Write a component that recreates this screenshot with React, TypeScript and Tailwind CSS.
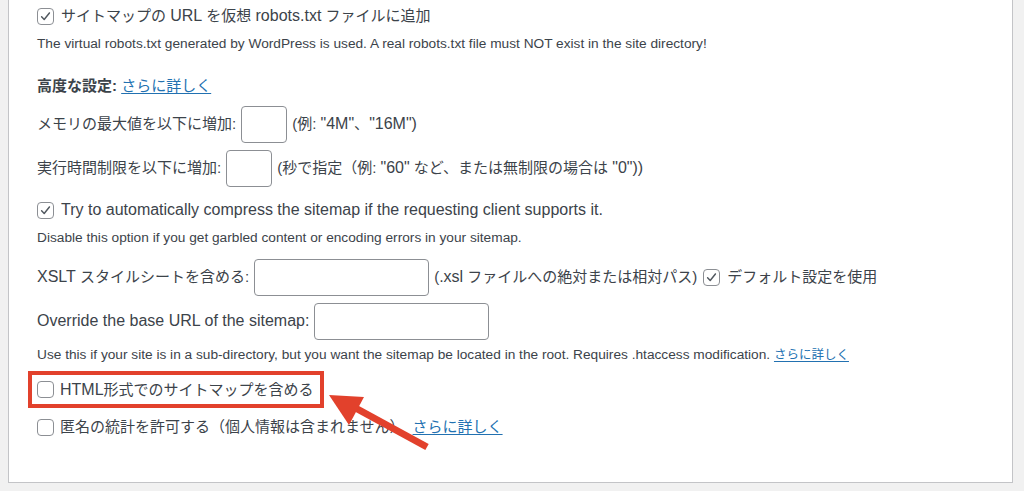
import type { ReactNode } from "react";

const Check = ({ checked }: { checked?: boolean }) => (
  <span className="flex h-[17px] w-[17px] shrink-0 items-center justify-center rounded-[4px] border border-[#8c8f94] bg-white">
    {checked && (
      <svg viewBox="0 0 16 16" className="h-[13px] w-[13px]">
        <path d="M3.2 8.4 L6.4 11.6 L12.8 3.6" fill="none" stroke="#50575e" strokeWidth="1.8" strokeLinecap="round" strokeLinejoin="round" />
      </svg>
    )}
  </span>
);

const Field = ({ className }: { className: string }) => (
  <span className={`mx-[5px] inline-block h-[37px] rounded-[4px] border border-[#8c8f94] bg-white ${className}`} />
);

const Link = ({ children }: { children: string }) => (
  <a className="text-[#2271b1] underline underline-offset-2">{children}</a>
);

// latin runs render a bit larger than the CJK glyphs in the screenshot
const L = ({ children }: { children: ReactNode }) => <span className="text-[16px]">{children}</span>;

export default function App() {
  return (
    <div
      className="relative h-[491px] w-[1024px] overflow-hidden bg-[#f1f1f1] pl-[8px] pr-[11px] text-[#3c434a]"
      style={{ fontFamily: '"Liberation Sans", "Noto Sans CJK JP", sans-serif' }}
    >
      <div className="flex flex-col border-x border-b border-[#c3c4c7] bg-white pb-[44px] pl-[28px] text-[15px]">
        {/* sitemap url in robots */}
        <div className="flex h-[32px] items-center gap-[7px]">
          <Check checked />
          <span>
            サイトマップの <L>URL</L> を仮想 <L>robots.txt</L> ファイルに追加
          </span>
        </div>
        <div className="flex h-[24px] items-center text-[13.7px]">
          The virtual robots.txt generated by WordPress is used. A real robots.txt file must NOT exist in the site directory!
        </div>

        {/* advanced */}
        <div className="mt-[14px] flex h-[32px] items-center">
          <span className="font-bold">高度な設定:</span>&nbsp;<Link>さらに詳しく</Link>
        </div>
        <div className="mt-[3px] flex h-[38px] items-center">
          <span>メモリの最大値を以下に増加:</span>
          <Field className="w-[46px]" />
          <span>
            (例: <L>"4M"</L>、<L>"16M")</L>
          </span>
        </div>
        <div className="mt-[6px] flex h-[38px] items-center">
          <span>実行時間制限を以下に増加:</span>
          <Field className="w-[46px]" />
          <span>
            (秒で指定（例: <L>"60"</L> など、または無制限の場合は <L>"0"))</L>
          </span>
        </div>

        <div className="mt-[9px] flex h-[28px] items-center gap-[7px]">
          <Check checked />
          <L>Try to automatically compress the sitemap if the requesting client supports it.</L>
        </div>
        <div className="mt-[4px] flex h-[20px] items-center text-[13.7px]">
          Disable this option if you get garbled content or encoding errors in your sitemap.
        </div>

        <div className="mt-[10px] flex h-[38px] items-center">
          <span>
            <L>XSLT</L> スタイルシートを含める:
          </span>
          <Field className="w-[175px]" />
          <span>
            (<L>.xsl</L> ファイルへの絶対または相対パス)
          </span>
          <span className="ml-[6px] mr-[7px]">
            <Check checked />
          </span>
          <span>デフォルト設定を使用</span>
        </div>
        <div className="mt-[6px] flex h-[38px] items-center">
          <L>Override the base URL of the sitemap:</L>
          <Field className="w-[175px]" />
        </div>
        <div className="mt-[5px] flex h-[20px] items-center text-[13.7px]">
          Use this if your site is in a sub-directory, but you want the sitemap be located in the root. Requires .htaccess modification.&nbsp;
          <span className="text-[12.5px]">
            <Link>さらに詳しく</Link>
          </span>
        </div>

        {/* highlighted option */}
        <div className="mt-[6px] -ml-[9px] flex">
          <div className="flex h-[37px] items-center gap-[6px] border-4 border-[#e2412c] pl-[5px] pr-[6px]">
            <Check />
            <span>
              <L>HTML</L>形式でのサイトマップを含める
            </span>
          </div>
        </div>
        <div className="mt-[8px] flex h-[22px] items-center gap-[6px]">
          <Check />
          <span>匿名の統計を許可する（個人情報は含まれません）</span>
          <span className="ml-[2px]">
            <Link>さらに詳しく</Link>
          </span>
        </div>
      </div>

      {/* annotation arrow */}
      <svg className="pointer-events-none absolute left-0 top-0" width="1024" height="491">
        <line x1="427" y1="447" x2="350" y2="405" stroke="#e2412c" strokeWidth="7" />
        <polygon points="329,395 364,397 349,425" fill="#e2412c" />
      </svg>
    </div>
  );
}
